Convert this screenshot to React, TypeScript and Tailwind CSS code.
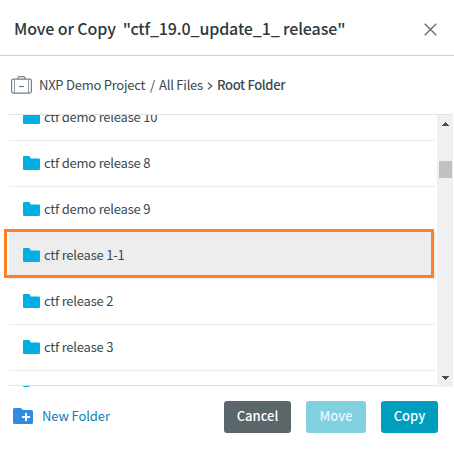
const names = [
  'ctf demo release 10',
  'ctf demo release 8',
  'ctf demo release 9',
  'ctf release 1-1',
  'ctf release 2',
  'ctf release 3',
  'ctf release 4',
];

function FolderIcon() {
  return (
    <svg className="block shrink-0" width="17" height="14" viewBox="0 0 17 14">
      <path fill="#00b0e2" d="M1.200 0h4.600Q6.500 0 6.800.6L7.700 2.500h8.100A1.200 1.200 0 0 1 17 3.700v9.100a1.200 1.200 0 0 1-1.200 1.200H1.200A1.200 1.200 0 0 1 0 12.800V1.200A1.200 1.200 0 0 1 1.200 0z" />
    </svg>
  );
}

function BriefcaseIcon() {
  return (
    <svg className="block shrink-0" width="21" height="18" viewBox="0 0 21 18" fill="none" stroke="#72808a">
      <rect x="0.600" y="3.100" width="19.800" height="14" rx="1.800" strokeWidth="1.200" />
      <path d="M7 3V2.200Q7 .6 8.600 .6h3.800Q14 .6 14 2.200V3" strokeWidth="1.200" />
      <path d="M3.500 3.500v13.500M17.500 3.500v13.500" strokeWidth="0.800" />
      <path d="M8 10.500h5" strokeWidth="1.300" />
    </svg>
  );
}

function NewFolderIcon() {
  return (
    <svg className="block shrink-0" width="20" height="16" viewBox="0 0 20 16">
      <path fill="#318be0" d="M1.500 0h6.300l2 2H18.500A1.500 1.500 0 0 1 20 3.500v11a1.500 1.500 0 0 1-1.500 1.500h-17A1.500 1.500 0 0 1 0 14.500v-13A1.500 1.500 0 0 1 1.500 0z" />
      <path d="M13 5v8M9 9h8" stroke="#fff" strokeWidth="2" />
    </svg>
  );
}

export default function App() {
  return (
    <div className="relative flex h-[456px] w-[454px] flex-col overflow-hidden bg-white font-['Noto_Sans_CJK_SC','Noto_Sans',sans-serif] text-[13px] text-[#3a4a50]">
      <header className="flex h-14 shrink-0 items-center justify-between border-b border-[#c9d1d6] pr-[17px] pl-[14px]">
        <h1 className="text-[16px] leading-6 font-medium tracking-[-0.12px] whitespace-pre text-[#2c393d]">{'Move or Copy  "ctf_19.0_update_1_ release"'}</h1>
        <svg className="mt-[3px] block" width="13" height="13" viewBox="0 0 13 13">
          <path d="M.7.7l11.600 11.600M12.300.7L.7 12.300" stroke="#6d6d6d" strokeWidth="1.400" />
        </svg>
      </header>
      <nav className="flex h-[58px] shrink-0 items-center pl-[11px] leading-5 whitespace-pre">
        <BriefcaseIcon />
        <span className="ml-[7px] w-[107px] tracking-[-0.25px]">NXP Demo Project</span>
        <span className="ml-1 w-[5px]">/</span>
        <span className="ml-1 w-[45px] tracking-[-0.22px]">All Files</span>
        <svg className="mt-px ml-[3px] block" width="6" height="8" viewBox="0 0 6 8" fill="none">
          <path d="M1 .7L4.700 4 1 7.300" stroke="#5a666b" strokeWidth="1.500" />
        </svg>
        <span className="ml-1 font-medium tracking-[-0.35px]">Root Folder</span>
      </nav>
      <section className="relative ml-[9px] flex h-[273px] w-[444px] shrink-0 overflow-hidden border-t border-[#e2e2e2]">
        <ul className="-mt-[21px] w-[427px] shrink-0">
          {names.map((name, i) => (
            <li
              key={name}
              className={`flex h-[46px] items-center border-t border-[#ececec] pb-px pl-[14px] leading-5 ${i === 3 ? 'bg-[#ededed]' : ''}`}
            >
              <FolderIcon />
              <span className="ml-1 pb-px tracking-[-0.22px] whitespace-pre">{name}</span>
            </li>
          ))}
        </ul>
        <div className="ml-px flex w-4 shrink-0 flex-col items-center bg-[#f0f0f0]">
          <svg className="mt-[7px] block shrink-0" width="7" height="4" viewBox="0 0 7 4" shapeRendering="crispEdges">
            <path d="M3 0h1v1h1v1h1v1h1v1H0V3h1V2h1V1h1z" fill="#505050" />
          </svg>
          <div className="mt-[35px] h-[17px] w-[13px] shrink-0 bg-[#c1c1c1]" />
          <svg className="mt-auto mb-[7px] block shrink-0" width="7" height="4" viewBox="0 0 7 4" shapeRendering="crispEdges">
            <path d="M0 0h7v1H6v1H5v1H4v1H3V3H2V2H1V1H0z" fill="#505050" />
          </svg>
        </div>
        <div className="absolute bottom-px left-0 h-px w-[428px] bg-[#e0e0e0]" />
      </section>
      <div className="absolute top-[229px] left-[4px] h-[49px] w-[430px] border-[3px] border-[#ff7f27]" />
      <footer className="flex shrink-0 items-center pt-[14px] pl-[13px] leading-5">
        <div className="mb-[2px] flex items-center">
          <NewFolderIcon />
          <span className="ml-[9px] w-[182px] tracking-[-0.1px] text-[#0b80b5]">New Folder</span>
        </div>
        <button className="h-8 w-[67px] rounded-[3px] bg-[#5a6669] pb-[2px] font-medium text-white">Cancel</button>
        <button className="ml-[15px] h-8 w-[60px] rounded-[3px] bg-[#81cfdf] pb-[2px] font-medium text-[#e8f9fc]">Move</button>
        <button className="ml-[15px] h-8 w-[57px] rounded-[3px] bg-[#009dbf] pb-[2px] font-medium text-white">Copy</button>
      </footer>
    </div>
  );
}
